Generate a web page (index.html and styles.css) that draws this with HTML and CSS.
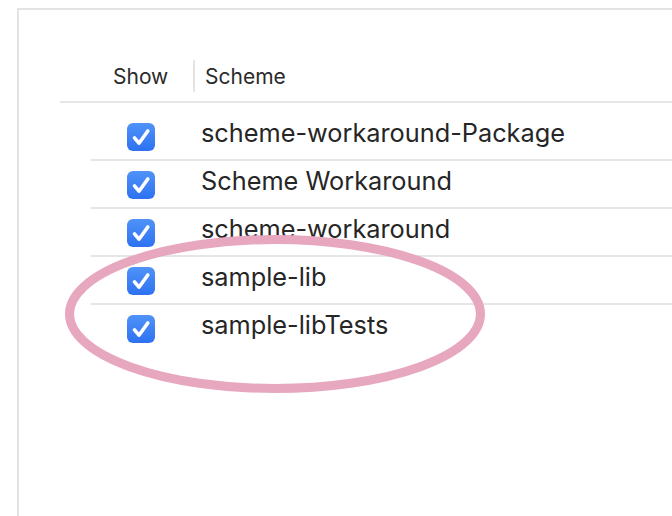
FILE: index.html
```html
<!DOCTYPE html>
<html>
<head>
<meta charset="utf-8">
<link rel="stylesheet" href="styles.css">
</head>
<body>
<div class="frame">
  <div class="table">
    <div class="header">
      <div class="col-show">Show</div>
      <div class="col-divider"></div>
      <div class="col-scheme">Scheme</div>
    </div>
    <div class="rows">
      <div class="row">
        <span class="check"><svg viewBox="0 0 28 28" width="28" height="28"><path d="M7.5 14.8 L12 20.2 L20.8 8" /></svg></span>
        <span class="name">scheme-workaround-Package</span>
      </div>
      <div class="row">
        <span class="check"><svg viewBox="0 0 28 28" width="28" height="28"><path d="M7.5 14.8 L12 20.2 L20.8 8" /></svg></span>
        <span class="name">Scheme Workaround</span>
      </div>
      <div class="row">
        <span class="check"><svg viewBox="0 0 28 28" width="28" height="28"><path d="M7.5 14.8 L12 20.2 L20.8 8" /></svg></span>
        <span class="name">scheme-workaround</span>
      </div>
      <div class="row">
        <span class="check"><svg viewBox="0 0 28 28" width="28" height="28"><path d="M7.5 14.8 L12 20.2 L20.8 8" /></svg></span>
        <span class="name">sample-lib</span>
      </div>
      <div class="row last">
        <span class="check"><svg viewBox="0 0 28 28" width="28" height="28"><path d="M7.5 14.8 L12 20.2 L20.8 8" /></svg></span>
        <span class="name">sample-libTests</span>
      </div>
    </div>
  </div>
</div>
<svg class="annotation" viewBox="0 0 672 516" width="672" height="516">
  <ellipse cx="275" cy="314" rx="205.5" ry="74.5" />
</svg>
</body>
</html>
```

FILE: styles.css
```css
html, body {
  margin: 0;
  padding: 0;
  background: #ffffff;
  width: 672px;
  height: 516px;
  overflow: hidden;
  font-family: Inter, "Liberation Sans", sans-serif;
}

.frame {
  margin-top: 8px;
  margin-left: 17px;
  height: 508px;
  border-top: 2px solid #e3e3e3;
  border-left: 2px solid #e3e3e3;
  box-sizing: border-box;
}

.table {
  margin-left: 41px;
}

.header {
  display: flex;
  align-items: center;
  padding-top: 50px;
  padding-bottom: 9px;
  height: 32px;
  border-bottom: 2px solid #e6e6e6;
  font-size: 21px;
  color: #2b2b2b;
}

.col-show {
  width: 133px;
  padding-left: 53px;
  box-sizing: border-box;
}

.col-divider {
  width: 2px;
  height: 32px;
  background: #e4e4e4;
}

.col-scheme {
  padding-left: 10px;
}

.rows {
  margin-left: 31px;
  padding-top: 10px;
}

.row {
  display: flex;
  align-items: flex-start;
  height: 46px;
  border-bottom: 2px solid #e6e6e6;
}

.row.last {
  border-bottom: none;
}

.check {
  margin-left: 36px;
  margin-top: 10px;
  width: 28px;
  height: 28px;
  border-radius: 6px;
  background: linear-gradient(#4f93f8, #2e71f2);
  display: block;
}

.check svg {
  display: block;
}

.check path {
  fill: none;
  stroke: #ffffff;
  stroke-width: 3.6;
  stroke-linecap: round;
  stroke-linejoin: round;
}

.name {
  margin-left: 46px;
  margin-top: 4px;
  font-size: 25.3px;
  line-height: 32px;
  color: #262626;
}

.annotation {
  position: absolute;
  left: 0;
  top: 0;
  pointer-events: none;
}

.annotation ellipse {
  fill: none;
  stroke: #e7a8bf;
  stroke-width: 9;
}
```
